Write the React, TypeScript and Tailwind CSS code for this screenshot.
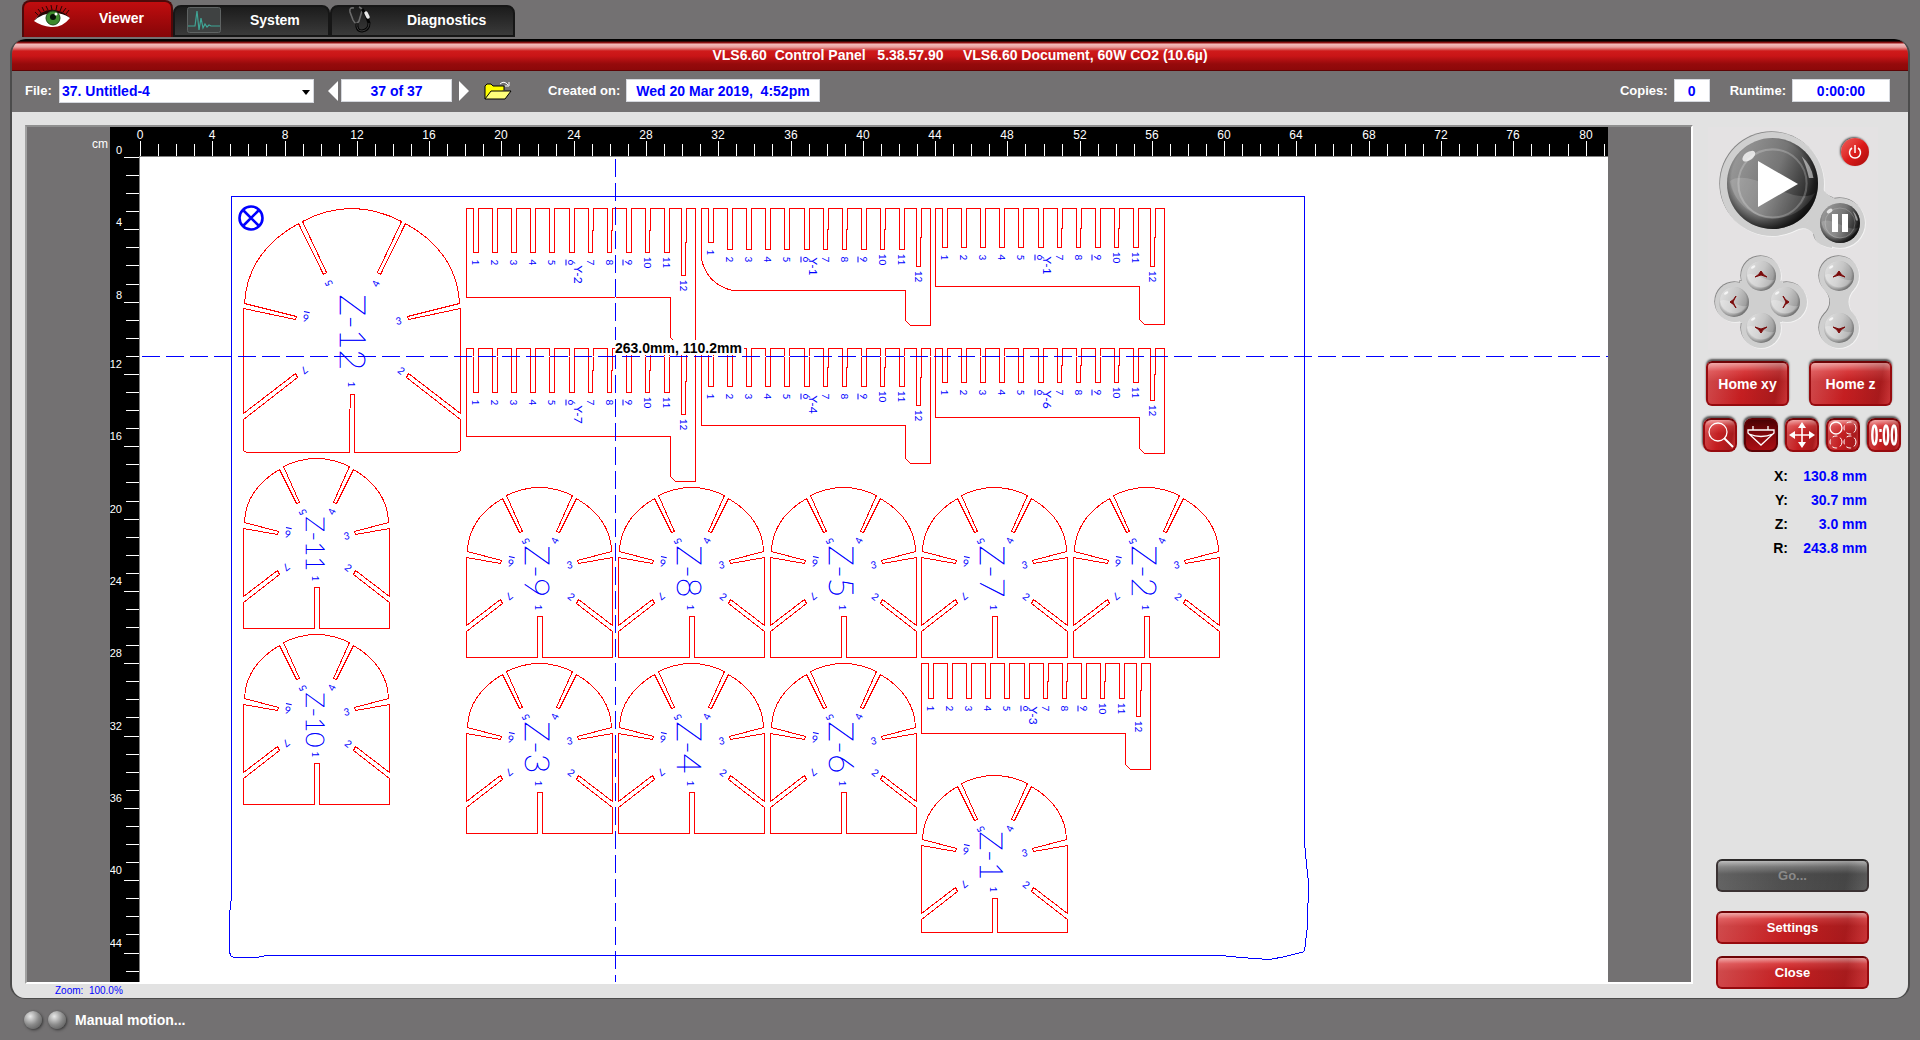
import React, { useState } from "react";

type Point = [number, number];

const toPath = (points: Point[]) => "M" + points.map((p) => p.join(" ")).join("L");

/* ---------- engraving artwork ---------- */

type CombSpec = {
  x: number;
  top: number;
  slot: number;
  last: number;
  body: number;
  tail: number;
  name: string;
  nameGap: number;
  rounded?: boolean;
};

const combs: CombSpec[] = [
  { x: 466, top: 208, slot: 252, last: 275, body: 297, tail: 342, name: "Y-2", nameGap: 13 },
  { x: 701, top: 208, slot: 249, last: 266, body: 290, tail: 325, name: "Y-1", nameGap: 8, rounded: true },
  { x: 935, top: 208, slot: 247, last: 266, body: 286, tail: 324, name: "Y-1", nameGap: 9 },
  { x: 466, top: 348, slot: 392, last: 414, body: 436, tail: 481, name: "Y-7", nameGap: 13 },
  { x: 701, top: 348, slot: 386, last: 405, body: 425, tail: 463, name: "Y-4", nameGap: 9 },
  { x: 935, top: 348, slot: 382, last: 400, body: 417, tail: 453, name: "Y-6", nameGap: 8 },
  { x: 921, top: 663, slot: 698, last: 716, body: 733, tail: 769, name: "Y-3", nameGap: 8 },
];

const steppedSlots = [6, 7, 9, 11];

function slotX(i: number) {
  return i === 11 ? 215 : 7 + 19 * i + (i >= 5 ? 1 : 0);
}

function slotBottom(c: CombSpec, i: number) {
  if (i === 11) return c.last;
  if (c.rounded && i === 0) return c.slot - 7;
  return c.slot;
}

function Comb({ c }: { c: CombSpec }) {
  const pts: Point[] = [[c.x, c.top]];
  for (let i = 0; i < 12; i++) {
    const left = c.x + slotX(i);
    const bottom = slotBottom(c, i);
    const mid = Math.round((c.top + bottom) / 2);
    const foot = steppedSlots.includes(i) ? 4 : 5;
    pts.push([left, c.top], [left, bottom], [left + foot, bottom], [left + foot, mid], [left + 5, mid], [left + 5, c.top]);
  }
  pts.push(
    [c.x + 229, c.top],
    [c.x + 229, c.tail],
    [c.x + 209, c.tail],
    [c.x + 204, c.tail - 5],
    [c.x + 204, c.body]
  );
  const end = c.rounded
    ? `L${c.x + 31} ${c.body}Q${c.x + 6} ${c.body - 6} ${c.x} ${c.body - 31}Z`
    : `L${c.x} ${c.body}Z`;
  return (
    <g>
      <path d={toPath(pts) + end} fill="none" stroke="#ff0000" shapeRendering="crispEdges" />
      {Array.from({ length: 12 }, (_, i) => (
        <text
          key={i}
          transform={`translate(${c.x + slotX(i) - 2} ${slotBottom(c, i) + 10}) rotate(90)`}
          textAnchor="middle"
          fontSize="10"
          textDecoration={i === 5 || i === 8 ? "underline" : undefined}
        >
          {i + 1}
        </text>
      ))}
      <text transform={`translate(${c.x + 107} ${c.slot + c.nameGap}) rotate(90)`} fontSize="12">
        {c.name}
      </text>
    </g>
  );
}

type Mark = { n: number; x: number; y: number; angle: number };

const smallMarks: Mark[] = [
  { n: 1, x: 72, y: 120, angle: 90 },
  { n: 2, x: 105, y: 109, angle: 39 },
  { n: 3, x: 103, y: 77, angle: -12 },
  { n: 4, x: 88, y: 53, angle: -64 },
  { n: 5, x: 59, y: 54, angle: -116 },
  { n: 6, x: 44, y: 76, angle: -168 },
  { n: 7, x: 43, y: 109, angle: 141 },
];

const largeMarks: Mark[] = [
  { n: 1, x: 108, y: 176, angle: 90 },
  { n: 2, x: 158, y: 162, angle: 39 },
  { n: 3, x: 155, y: 112, angle: -12 },
  { n: 4, x: 132, y: 75, angle: -64 },
  { n: 5, x: 85, y: 75, angle: -116 },
  { n: 6, x: 62, y: 110, angle: -168 },
  { n: 7, x: 61, y: 162, angle: 141 },
];

function smallOutline(h: number) {
  const slot = h === 170 ? 129 : 123;
  return (
    `M40 8Q73 -8 106 8L90 44L93 45L110 11Q144 31 145 64L111 73L112 76L146 70V138L112 112L110 116L146 144V${h}` +
    `H76V${slot}H71V${h}H0V144L36 116L34 112L0 138V70L34 76L35 73L1 64Q2 31 36 11L53 45L56 44Z`
  );
}

const largeOutline =
  "M59 13Q108 -13 158 13L134 64L137 66L162 15Q213 43 216 95L164 108L165 111L217 100V205L165 165L163 169L217 211V242L214 244" +
  "H111V186H107L106 215V244H3L0 242V211L54 169L52 165L0 205V100L52 111L53 108L1 95Q4 43 55 15L80 66L83 64Z";

type DomeSpec = { x: number; y: number; name: string; h?: number; size?: number; large?: boolean };

const domes: DomeSpec[] = [
  { x: 243, y: 208, name: "Z-12", large: true, size: 36 },
  { x: 243, y: 458, name: "Z-11", size: 26 },
  { x: 243, y: 634, name: "Z-10", size: 26 },
  { x: 466, y: 487, name: "Z-9", size: 34 },
  { x: 618, y: 487, name: "Z-8", size: 34 },
  { x: 770, y: 487, name: "Z-5", size: 34 },
  { x: 921, y: 487, name: "Z-7", size: 34 },
  { x: 1073, y: 487, name: "Z-2", size: 34 },
  { x: 466, y: 663, name: "Z-3", size: 34 },
  { x: 618, y: 663, name: "Z-4", size: 34 },
  { x: 770, y: 663, name: "Z-6", size: 34 },
  { x: 921, y: 775, name: "Z-1", size: 32, h: 157 },
];

function Dome({ d }: { d: DomeSpec }) {
  const marks = d.large ? largeMarks : smallMarks;
  const nameX = d.large ? 96 : d.size === 26 ? 62 : 58;
  const nameY = d.large ? 86 : d.h ? 56 : 58;
  return (
    <g transform={`translate(${d.x} ${d.y})`}>
      <path
        d={d.large ? largeOutline : smallOutline(d.h ?? 170)}
        fill="none"
        stroke="#ff0000"
        shapeRendering="crispEdges"
      />
      {marks.map((m) => (
        <text
          key={m.n}
          transform={`translate(${m.x} ${m.n === 1 && d.h ? 114 : m.y}) rotate(${m.angle})`}
          textAnchor="middle"
          dominantBaseline="central"
          fontSize="10"
          textDecoration={m.n === 6 ? "underline" : undefined}
        >
          {m.n}
        </text>
      ))}
      <text
        transform={`translate(${nameX} ${nameY}) rotate(90)`}
        fontSize={d.size}
        fontWeight="100"
        stroke="#0000ff"
        strokeWidth="0.600"
      >
        {d.name}
      </text>
    </g>
  );
}

function Workspace() {
  const cmX = (n: number) => Math.round(140 + n * 18.07);
  const cmY = (n: number) => Math.round(157 + n * 18.08);
  return (
    <svg width="1498" height="855" viewBox="110 127 1498 855" className="block shrink-0">
      <rect x="110" y="127" width="1498" height="855" fill="#000" />
      <rect x="139" y="156" width="1469" height="826" fill="#808080" />
      <rect x="140" y="157" width="1468" height="825" fill="#fff" />

      <g fill="#fff" fontFamily="'Liberation Sans', Arial, sans-serif" fontWeight="400">
        {Array.from({ length: 82 }, (_, n) => (
          <rect key={n} x={cmX(n)} y={n % 4 ? 144 : 141} width="1" height={n % 4 ? 12 : 15} />
        ))}
        {Array.from({ length: 46 }, (_, n) => (
          <rect key={n} x={n % 4 ? 126 : 124} y={cmY(n)} width={n % 4 ? 13 : 15} height="1" />
        ))}
        {Array.from({ length: 21 }, (_, k) => (
          <text key={k} x={cmX(k * 4)} y="139" fontSize="12" textAnchor="middle">
            {k * 4}
          </text>
        ))}
        {Array.from({ length: 12 }, (_, k) => (
          <text key={k} x="122" y={cmY(k * 4) - (k < 3 ? 3 : 6)} fontSize="11" textAnchor="end">
            {k * 4}
          </text>
        ))}
      </g>

      <g transform="translate(.5 .5)">
        <path
          d="M231 196H1304V842L1306 864L1308 882L1307 925L1304 951L1285 956L1269 959L1240 957L1220 955H266L256 957H233L230 955L229 951V914L231 896Z"
          fill="none"
          stroke="#0000ff"
          shapeRendering="crispEdges"
        />
        <g fill="#0000ff" fontFamily="Lato, sans-serif" fontWeight="400">
          {combs.map((c, i) => (
            <Comb key={i} c={c} />
          ))}
          {domes.map((d) => (
            <Dome key={d.name} d={d} />
          ))}
        </g>
        <g fill="none" stroke="#0000ff">
          <circle cx="250.500" cy="217.500" r="11.500" strokeWidth="2.600" />
          <path d="M243 210L258 225M258 210L243 225" strokeWidth="2.600" />
        </g>
        <g fill="none" stroke="#fff" shapeRendering="crispEdges">
          <path d="M141 356H1608M615 158V982" />
          <path d="M141 356H1608M615 158V982" stroke="#0000ff" strokeDasharray="18 6" />
        </g>
      </g>
      <rect x="615" y="340" width="129" height="15" fill="#fff" />
      <text x="615" y="353" fontSize="14" fontWeight="700" fontFamily="'Liberation Sans', Arial, sans-serif">
        263.0mm, 110.2mm
      </text>
    </svg>
  );
}

/* ---------- tabs ---------- */

function EyeIcon() {
  return (
    <svg width="38" height="26" viewBox="0 0 38 26" aria-hidden="true">
      <path d="M1 16Q9 4 22 6Q31 7 37 13Q29 23 18 22Q8 21 1 16Z" fill="#fff" />
      <path d="M1 16Q9 3 22 5Q31 6 37 13Q30 8 21 8Q9 8 1 16Z" fill="#2a0505" />
      <circle cx="20" cy="13" r="7" fill="#3d8a2c" />
      <circle cx="20" cy="13" r="7" fill="none" stroke="#1d4a18" />
      <circle cx="20" cy="12" r="3" fill="#071207" />
      <circle cx="23" cy="9" r="1.500" fill="#fff" />
      <path
        d="M5 10L2 7M8 8L5 4M11 6L9 2M15 5L13 1M19 5L18 0M23 5L24 0M27 6L29 1M30 7L33 3M33 9L36 5"
        stroke="#1a0303"
        strokeWidth="0.900"
      />
    </svg>
  );
}

function PulseIcon() {
  return (
    <svg width="34" height="26" viewBox="0 0 34 26" aria-hidden="true">
      <rect x="0.500" y="0.500" width="33" height="25" rx="2" fill="#3f4242" stroke="#5f6363" />
      <path
        d="M1 19H8L10 4L12 23L14 11L16 21L18 17L20 20L22 18L24 19H33"
        fill="none"
        stroke="#3fa596"
        strokeWidth="1.200"
      />
    </svg>
  );
}

function StethoscopeIcon() {
  return (
    <svg width="24" height="28" viewBox="0 0 24 28" fill="none" aria-hidden="true">
      <path d="M6 2Q1 1 2 6L5 14Q8 20 11 15L14 5Q14 2 11 1" stroke="#6b6b6b" strokeWidth="1.600" />
      <path d="M9 17Q8 25 14 25Q21 24 21 17L18 9L14 3" stroke="#050505" strokeWidth="3" />
      <path d="M9 17Q8 25 14 25Q21 24 21 17" stroke="#3b3b3b" strokeWidth="1" />
      <path d="M18 7L20 11" stroke="#e8e8e8" strokeWidth="3.500" strokeLinecap="round" />
    </svg>
  );
}

/* ---------- motion pad ---------- */

function Orb({ dark, size, children }: { dark?: boolean; size: number; children?: React.ReactNode }) {
  const c = size / 2;
  const id = dark ? "orb-dark" + size : "orb-light" + size;
  return (
    <svg width={size} height={size} viewBox={`0 0 ${size} ${size}`} className="block" aria-hidden="true">
      <defs>
        <linearGradient id={id} x1="0" y1="0" x2="1" y2="0.400">
          <stop offset="0" stopColor={dark ? "#a2a2a2" : "#e4e4e4"} />
          <stop offset="0.600" stopColor={dark ? "#757575" : "#c6c6c6"} />
          <stop offset="1" stopColor={dark ? "#262626" : "#9a9a9a"} />
        </linearGradient>
        <radialGradient id={id + "rim"} cx="0.480" cy="0.440" r="0.570">
          <stop offset="0.750" stopColor="#000" stopOpacity="0" />
          <stop offset="1" stopColor="#000" stopOpacity={dark ? "0.700" : "0.350"} />
        </radialGradient>
      </defs>
      <circle cx={c} cy={c} r={c} fill={`url(#${id})`} />
      <path
        d={`M${c * 0.06} ${c * 0.95}Q${c * 0.3} ${c * 0.75} ${c} ${c * 1.08}T${c * 1.94} ${c * 1.2}A${c} ${c} 0 0 1 ${c * 0.06} ${c * 0.95}Z`}
        fill="#fff"
        opacity={dark ? 0.15 : 0.25}
      />
      <circle cx={c} cy={c} r={c} fill={`url(#${id}rim)`} />
      {dark && <circle cx={c} cy={c} r={c * 0.75} fill="none" stroke="#fff" strokeOpacity="0.220" strokeWidth={c / 22} />}
      <ellipse
        cx={c * 0.48}
        cy={c * 0.4}
        rx={c * 0.16}
        ry={c * 0.09}
        fill="#fff"
        opacity="0.750"
        transform={`rotate(-35 ${c * 0.48} ${c * 0.4})`}
      />
      {dark && (
        <path
          d={`M${c * 1.64} ${c * 0.4}Q${c * 1.86} ${c * 0.6} ${c * 1.9} ${c * 0.88}L${c * 1.8} ${c * 0.88}Q${c * 1.74} ${c * 0.6} ${c * 1.64} ${c * 0.4}Z`}
          fill="#fff"
          opacity="0.500"
        />
      )}
      {children}
    </svg>
  );
}

const chevrons: Record<string, string> = {
  up: "M9 16Q13 14 15 10Q17 14 21 16L15 14Z",
  down: "M9 14Q13 16 15 20Q17 16 21 14L15 16Z",
  left: "M17 9Q15 13 11 15Q15 17 17 21L14 15Z",
  right: "M13 9Q15 13 19 15Q15 17 13 21L16 15Z",
};

function JogButton({ dir, label, place }: { dir: string; label: string; place: string }) {
  return (
    <button type="button" aria-label={label} className={`absolute size-[30px] rounded-full ${place}`}>
      <Orb size={30}>
        <path d={chevrons[dir]} fill="#7a0a0a" stroke="#7a0a0a" strokeWidth="1" />
      </Orb>
    </button>
  );
}

function MotionPad() {
  const well = (
    <>
      <circle cx="64" cy="57" r="52" />
      <circle cx="132" cy="96" r="25" />
      <path d="M100 94L114 60Q118 69 126 71L124 121Q106 118 106 107Q98 98 88 103Z" />
      <circle cx="53" cy="149" r="20" />
      <circle cx="27" cy="175" r="20" />
      <circle cx="79" cy="175" r="20" />
      <circle cx="53" cy="201" r="20" />
      <path d="M32 154H74V195H32Z" />
      <circle cx="131" cy="149" r="20" />
      <circle cx="131" cy="201" r="20" />
      <path d="M116 162Q128 175 116 188H146Q135 175 146 162Z" />
    </>
  );
  return (
    <div className="relative h-[223px] w-[170px] bg-[#e4e2e3]">
      <svg width="170" height="223" viewBox="0 0 170 223" aria-hidden="true">
        <g fill="#858585" transform="translate(-.7 -.8)">{well}</g>
        <g fill="#f4f4f4" transform="translate(.8 .8)">{well}</g>
        <g fill="#cfcfcf">{well}</g>
      </svg>
      <button type="button" aria-label="Start" className="absolute left-[19px] top-[11px] size-[91px] rounded-full">
        <Orb dark size={91}>
          <path d="M31 23V69L71 46Z" fill="#fff" />
        </Orb>
      </button>
      <button type="button" aria-label="Pause" className="absolute left-[112px] top-[76px] size-[40px] rounded-full">
        <Orb dark size={40}>
          <path d="M12 11H18V29H12ZM22 11H28V29H22Z" fill="#fff" />
        </Orb>
      </button>
      <button
        type="button"
        aria-label="Power"
        className="absolute left-[133px] top-[11px] flex size-7 items-center justify-center rounded-full bg-linear-to-br from-[#ee5a5a] via-[#dd1b1b] to-[#a80c0c] shadow-[-1px_-1px_2px_#555]"
      >
        <svg width="16" height="16" viewBox="0 0 16 16" fill="none" stroke="#fff" strokeWidth="1.500" aria-hidden="true">
          <path d="M8 1V9M5 4A5.500 5.500 0 1 0 11 4" />
        </svg>
      </button>
      <JogButton dir="up" label="Move up" place="left-[38px] top-[134px]" />
      <JogButton dir="left" label="Move left" place="left-[11px] top-[160px]" />
      <JogButton dir="right" label="Move right" place="left-[62px] top-[160px]" />
      <JogButton dir="down" label="Move down" place="left-[38px] top-[186px]" />
      <JogButton dir="up" label="Raise table" place="left-[116px] top-[134px]" />
      <JogButton dir="down" label="Lower table" place="left-[116px] top-[186px]" />
    </div>
  );
}

/* ---------- red buttons ---------- */

const redFace =
  "border-2 border-[#960a0e] border-t-[#6d0306] bg-[linear-gradient(100deg,rgba(255,255,255,0.2),rgba(255,255,255,0)_45%,rgba(0,0,0,0.15)_85%,rgba(255,255,255,0.1)),linear-gradient(180deg,#ee9a9a_0%,#d83a3c_20%,#c42022_45%,#c51d20_100%)]";

const grayFace =
  "border-2 border-[#3a3233] border-t-[#2c2a2a] bg-[linear-gradient(100deg,rgba(255,255,255,0.12),rgba(255,255,255,0)_45%,rgba(0,0,0,0.12)_85%,rgba(255,255,255,0.08)),linear-gradient(180deg,#b5b5b5_0%,#777_20%,#4e4e4e_45%,#505050_100%)]";

function ToolButton({ label, pressed, children }: { label: string; pressed?: boolean; children: React.ReactNode }) {
  return (
    <button
      type="button"
      aria-label={label}
      aria-pressed={!!pressed}
      className={`size-[34px] rounded-lg shadow-[-1px_-2px_2px_#555] ${
        pressed
          ? "border-2 border-[#5d0205] bg-[linear-gradient(180deg,#4a0003,#8e0a0e_60%,#a80f14)]"
          : redFace
      }`}
    >
      <svg width="30" height="30" viewBox="0 0 30 30" fill="none" stroke="#fff" strokeWidth="1.300" aria-hidden="true">
        {children}
      </svg>
    </button>
  );
}

function ToolButtons() {
  return (
    <div className="flex justify-between pl-[10px] pr-[7px]">
      <ToolButton label="Zoom">
        <circle cx="13" cy="12" r="9" />
        <path d="M19 18L28 27" strokeWidth="2" />
      </ToolButton>
      <ToolButton label="Focus" pressed>
        <path d="M2 10H28V13L15 25L2 13ZM7 10V6M22 10V6M3 14Q15 19 27 14" />
      </ToolButton>
      <ToolButton label="Relocate">
        <path d="M15 4V26M4 15H26" strokeWidth="1.600" />
        <path d="M15 2L19 8H11ZM15 28L19 22H11ZM2 15L8 11V19ZM28 15L22 11V19Z" fill="#fff" stroke="none" />
      </ToolButton>
      <ToolButton label="Duplicate">
        <circle cx="8" cy="8" r="6" />
        <g strokeDasharray="5 3" strokeWidth="1">
          <circle cx="22" cy="8" r="6" />
          <circle cx="8" cy="22" r="6" />
          <circle cx="22" cy="22" r="6" />
        </g>
      </ToolButton>
      <ToolButton label="Estimate">
        <g strokeWidth="2.400">
          <ellipse cx="5.500" cy="15" rx="2.200" ry="9.500" />
          <ellipse cx="17" cy="15" rx="2.200" ry="9.500" />
          <ellipse cx="25" cy="15" rx="2.200" ry="9.500" />
        </g>
        <path d="M11.500 9V12M11.500 19V22" strokeWidth="2.400" />
      </ToolButton>
    </div>
  );
}

const field = "border border-[#d5d8de] bg-white text-center text-[14px] text-[#0000ff] outline-none";

export default function App() {
  const [file, setFile] = useState("37");
  return (
    <div className="flex min-h-screen w-full flex-col overflow-hidden bg-[#737172] font-['Liberation_Sans',Arial,sans-serif] text-[13px] leading-4 font-bold text-white">
      <nav className="flex items-end pl-[22px] text-[14px]">
        <button
          type="button"
          className="flex h-[37px] w-[151px] items-center gap-7 rounded-t-lg border-2 border-b-0 border-[#4d0a0a] bg-linear-to-b from-[#c10d0f] to-[#850608] pl-[9px] pb-1"
        >
          <EyeIcon />
          Viewer
        </button>
        <button
          type="button"
          className="flex h-8 w-[157px] items-center gap-[29px] rounded-t-lg border-2 border-[#161616] bg-linear-to-b from-[#1c1c1c] to-[#3a3a3a] pb-0.5 pl-3"
        >
          <PulseIcon />
          System
        </button>
        <button
          type="button"
          className="flex h-8 w-[185px] items-center gap-[35px] rounded-t-lg border-2 border-[#161616] bg-linear-to-b from-[#1c1c1c] to-[#3a3a3a] pb-0.5 pl-4"
        >
          <StethoscopeIcon />
          Diagnostics
        </button>
      </nav>

      <main className="mx-[10px] mt-0.5 flex flex-1 flex-col overflow-hidden rounded-[15px] border-x-2 border-b border-[#4b4b4b]">
        <h1 className="flex h-8 items-center justify-center rounded-t-[14px] border-b border-[#5e0304] bg-[linear-gradient(180deg,#000_0,#000_2px,#6d0a0b_3px,#9c1517_4px,#f3bdbd_5px,#e9a0a0_8px,#d95f5f_10px,#cf1a1a_12px,#c91517_17px,#950a0b_25px,#8c0809_31px)] text-[14px] whitespace-pre">
          {"VLS6.60  Control Panel   5.38.57.90     VLS6.60 Document, 60W CO2 (10.6µ)"}
        </h1>

        <div className="flex h-[41px] items-center bg-[#737172] pl-[13px] pr-[18px] pb-0.5">
          <label htmlFor="file" className="w-[34px]">
            File:
          </label>
          <div className="relative">
            <select
              id="file"
              value={file}
              onChange={(e) => setFile(e.target.value)}
              className="block h-6 w-[255px] appearance-none border border-[#d5d8de] bg-white pl-0.5 text-[14px] text-[#0000ff] outline-none"
            >
              <option value="37">37. Untitled-4</option>
            </select>
            <svg width="8" height="5" viewBox="0 0 8 5" className="pointer-events-none absolute top-[11px] right-1" aria-hidden="true">
              <path d="M0 0H8L4 5Z" fill="#000" />
            </svg>
          </div>
          <button type="button" aria-label="Previous file" className="ml-3.5">
            <svg width="10" height="20" viewBox="0 0 10 20" aria-hidden="true">
              <path d="M10 0V20L0 10Z" fill="#fff" />
            </svg>
          </button>
          <input aria-label="File position" readOnly value="37 of 37" className={`ml-[3px] h-[23px] w-[111px] ${field}`} />
          <button type="button" aria-label="Next file" className="ml-[7px]">
            <svg width="10" height="20" viewBox="0 0 10 20" aria-hidden="true">
              <path d="M0 0V20L10 10Z" fill="#fff" />
            </svg>
          </button>
          <button type="button" aria-label="Open file" className="ml-[15px]">
            <svg width="28" height="20" viewBox="0 0 28 20" aria-hidden="true">
              <path d="M1 18V5L3 3H7L9 5H20V9" fill="#ffff00" stroke="#000" />
              <path d="M1 18L7 10H27L21 18Z" fill="#ffff7a" stroke="#000" />
              <path d="M16 3Q20 -1 24 4M25 1V5H21" fill="none" stroke="#fff" />
            </svg>
          </button>
          <label htmlFor="created" className="ml-9 w-[78px]">
            Created on:
          </label>
          <input
            id="created"
            readOnly
            value="Wed 20 Mar 2019,  4:52pm"
            className={`h-[23px] w-[194px] whitespace-pre ${field}`}
          />
          <label htmlFor="copies" className="ml-auto">
            Copies:
          </label>
          <input id="copies" defaultValue="0" className={`ml-1.5 h-[23px] w-9 ${field}`} />
          <label htmlFor="runtime" className="ml-5">
            Runtime:
          </label>
          <input id="runtime" readOnly value="0:00:00" className={`ml-1.5 h-[23px] w-[98px] ${field}`} />
        </div>

        <div className="flex flex-1 bg-[#e2e2e2] pt-[13px] pl-[13px]">
          <section className="flex min-w-0 flex-1 flex-col">
            <div className="flex justify-center overflow-hidden border-2 border-t-[#8f8f8f] border-l-[#a0a0a0] border-r-white border-b-white bg-[#737172]">
              <div className="w-0 flex-1 pt-[9px] pr-0.5 text-right text-[12px] font-normal">cm</div>
              <Workspace />
              <div className="w-0 flex-1 pr-0.5" />
            </div>
            <p className="pl-[30px] text-[10px] leading-[14px] font-normal whitespace-pre text-[#0000ff]">
              {"Zoom:  100.0%"}
            </p>
          </section>

          <aside className="flex w-[215px] shrink-0 flex-col pt-0.5 pb-[9px]">
            <div className="flex pl-[15px]">
              <MotionPad />
            </div>
            <div className="mt-[11px] flex gap-5 pl-[13px] text-[14px]">
              <button type="button" className={`h-[45px] w-[83px] rounded-md shadow-[0_-2px_2px_#555] ${redFace}`}>
                Home xy
              </button>
              <button type="button" className={`h-[45px] w-[83px] rounded-md shadow-[0_-2px_2px_#555] ${redFace}`}>
                Home z
              </button>
            </div>
            <div className="mt-3">
              <ToolButtons />
            </div>
            <dl className="mt-3 grid grid-cols-[95px_79px] text-[14px] leading-6">
              <dt className="text-right text-black">X:</dt>
              <dd className="text-right text-[#0000ff]">130.8 mm</dd>
              <dt className="text-right text-black">Y:</dt>
              <dd className="text-right text-[#0000ff]">30.7 mm</dd>
              <dt className="text-right text-black">Z:</dt>
              <dd className="text-right text-[#0000ff]">3.0 mm</dd>
              <dt className="text-right text-black">R:</dt>
              <dd className="text-right text-[#0000ff]">243.8 mm</dd>
            </dl>
            <div className="mt-auto flex flex-col gap-3 pr-[39px] pl-[23px]">
              <button type="button" disabled className={`mb-[7px] h-[33px] rounded-md text-[#8a8a8a] ${grayFace}`}>
                Go...
              </button>
              <button type="button" className={`h-[33px] rounded-md ${redFace}`}>
                Settings
              </button>
              <button type="button" className={`h-[33px] rounded-md ${redFace}`}>
                Close
              </button>
            </div>
          </aside>
        </div>
      </main>

      <footer className="flex h-[41px] items-center pl-6 text-[14px]">
        <span className="size-[18px] rounded-full bg-[radial-gradient(circle_at_35%_30%,#e8e8e8,#8a8a8a_50%,#4a4a4a)] shadow-[1px_1px_3px_#333]" />
        <span className="ml-1.5 size-[18px] rounded-full bg-[radial-gradient(circle_at_35%_30%,#e8e8e8,#8a8a8a_50%,#4a4a4a)] shadow-[1px_1px_3px_#333]" />
        <span className="ml-[9px]">Manual motion...</span>
      </footer>
    </div>
  );
}
